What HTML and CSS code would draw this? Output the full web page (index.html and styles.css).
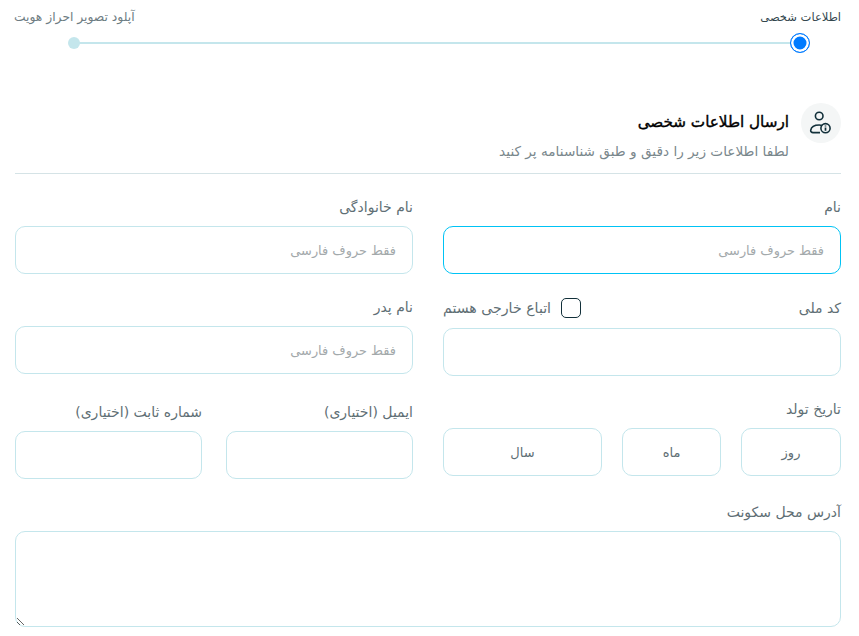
FILE: index.html
```html
<!DOCTYPE html>
<html lang="fa" dir="rtl">
<head>
<meta charset="utf-8">
<title>ارسال اطلاعات شخصی</title>
<link rel="stylesheet" href="styles.css">
</head>
<body>
<main class="page">
  <ol class="stepper">
    <li class="step step-active"><span class="step-label">اطلاعات شخصی</span><span class="step-dot"></span></li>
    <li class="step"><span class="step-label step-label-wide">آپلود تصویر احراز هویت</span><span class="step-dot"></span></li>
  </ol>
  <header class="head">
    <span class="head-icon">
      <svg width="24" height="24" viewBox="0 0 24 24" fill="none" stroke="#12303a" stroke-width="1.6">
        <circle cx="10.2" cy="5" r="3.800"/>
        <path d="M11 21.600H4c-1.500 0-2.500-1-2.300-2.300.5-3 3.500-5.300 8.500-5.300 1.200 0 2.300.1 3.200.4"/>
        <circle cx="16.500" cy="17.200" r="4.600"/>
        <path d="M16.500 16.600v3.200M16.500 14.400v1.100" stroke-width="1.700"/>
      </svg>
    </span>
    <div class="head-text">
      <h1 class="title">ارسال اطلاعات شخصی</h1>
      <p class="sub">لطفا اطلاعات زیر را دقیق و طبق شناسنامه پر کنید</p>
    </div>
  </header>
  <form class="form">
    <div class="row row-one">
      <div class="field">
        <label class="label">نام</label>
        <input class="input input-focus" placeholder="فقط حروف فارسی">
      </div>
      <div class="field">
        <label class="label">نام خانوادگی</label>
        <input class="input" placeholder="فقط حروف فارسی">
      </div>
    </div>
    <div class="row row-two">
      <div class="field">
        <div class="label-row">
          <label class="label">کد ملی</label>
          <span class="foreign"><span class="check"></span><span class="label foreign-text">اتباع خارجی هستم</span></span>
        </div>
        <input class="input">
      </div>
      <div class="field">
        <label class="label">نام پدر</label>
        <input class="input" placeholder="فقط حروف فارسی">
      </div>
    </div>
    <div class="row row-three">
      <div class="field">
        <label class="label">تاریخ تولد</label>
        <div class="date">
          <button type="button" class="date-box">روز</button>
          <button type="button" class="date-box">ماه</button>
          <button type="button" class="date-box">سال</button>
        </div>
      </div>
      <div class="pair">
        <div class="field">
          <label class="label">ایمیل (اختیاری)</label>
          <input class="input">
        </div>
        <div class="field">
          <label class="label">شماره ثابت (اختیاری)</label>
          <input class="input">
        </div>
      </div>
    </div>
    <div class="field field-address">
      <label class="label">آدرس محل سکونت</label>
      <textarea class="area"></textarea>
    </div>
  </form>
</main>
</body>
</html>
```
FILE: styles.css
```css
* { box-sizing: border-box; }
html, body { margin: 0; height: 100%; overflow: hidden; background: #fff; }
body { font-family: "DejaVu Sans", sans-serif; color: #5f6f75; font-size: 13px; }
.page { padding: 0 18px 0 15px; }

.stepper { list-style: none; margin: 0; padding: 0; display: flex; justify-content: space-between; position: relative; height: 103px; margin-left: -1px; }
.stepper::before { content: ""; position: absolute; top: 42px; left: 60px; right: 41px; height: 2px; background: #c4e6ec; }
.step { display: flex; flex-direction: column; align-items: center; position: relative; }
.step-label { font-size: 11.5px; line-height: 16px; margin-top: 9px; color: #6e7d83; white-space: nowrap; }
.step-label-wide { font-size: 12.3px; }
.step-active .step-label { color: #33474e; }
.step-dot { width: 12px; height: 12px; border-radius: 50%; background: #c4e6ec; margin-top: 12px; }
.step-active .step-dot { width: 20px; height: 20px; background: #007bff; border: 1.500px solid #007bff; box-shadow: inset 0 0 0 2.500px #fff; margin-top: 8px; margin-right: 1px; }

.head { display: flex; align-items: flex-start; gap: 12px; height: 71px; border-bottom: 1px solid #d5e3e6; }
.head-icon { width: 40px; height: 40px; border-radius: 50%; background: #f4f6f6; display: flex; align-items: center; justify-content: center; }
.head-text { padding-top: 9px; }
.title { margin: 0; font-size: 15.200px; line-height: 20px; font-weight: 400; -webkit-text-stroke: 0.4px #000; color: #000; }
.sub { margin: 10px 0 0; font-size: 13.65px; line-height: 18px; color: #7a878c; }

.row { display: grid; grid-template-columns: 398px 398px; justify-content: space-between; }
.row-one { margin-top: 24px; }
.row-two { margin-top: 24px; }
.row-three { margin-top: 24px; }
.field { display: flex; flex-direction: column; min-width: 0; }
.label { font-size: 14px; line-height: 18px; color: #5f6f75; }
.field > .label { margin-bottom: 10px; }
.label-row { display: flex; justify-content: space-between; align-items: center; height: 20px; margin-bottom: 10px; }
.foreign { display: flex; align-items: center; gap: 10px; }
.foreign-text { white-space: nowrap; font-size: 14.150px; }
.check { width: 20px; height: 20px; border: 1.500px solid #12303a; border-radius: 5px; background: #fff; }

.input { width: 100%; height: 48px; border: 1px solid #c4e6ec; border-radius: 10px; padding: 0 16px; font: 12.900px "DejaVu Sans", sans-serif; color: #5f6f75; background: #fff; outline: none; }
.input::placeholder { color: #a3a9ab; opacity: 1; }
.input-focus { border-color: #00c3f5; }

.date { display: grid; grid-template-columns: 100px 99px 159px; justify-content: space-between; }
.date-box { height: 48px; border: 1px solid #c4e6ec; border-radius: 10px; background: #fff; font: 13px "DejaVu Sans", sans-serif; color: #5f6f75; padding: 0; }
.pair { display: grid; grid-template-columns: 187px 187px; justify-content: space-between; padding-top: 3px; }
.field-address { margin-top: 24px; }
.area { display: block; width: 100%; height: 96px; border: 1px solid #c4e6ec; border-radius: 10px; background: #fff; outline: none; }
```
